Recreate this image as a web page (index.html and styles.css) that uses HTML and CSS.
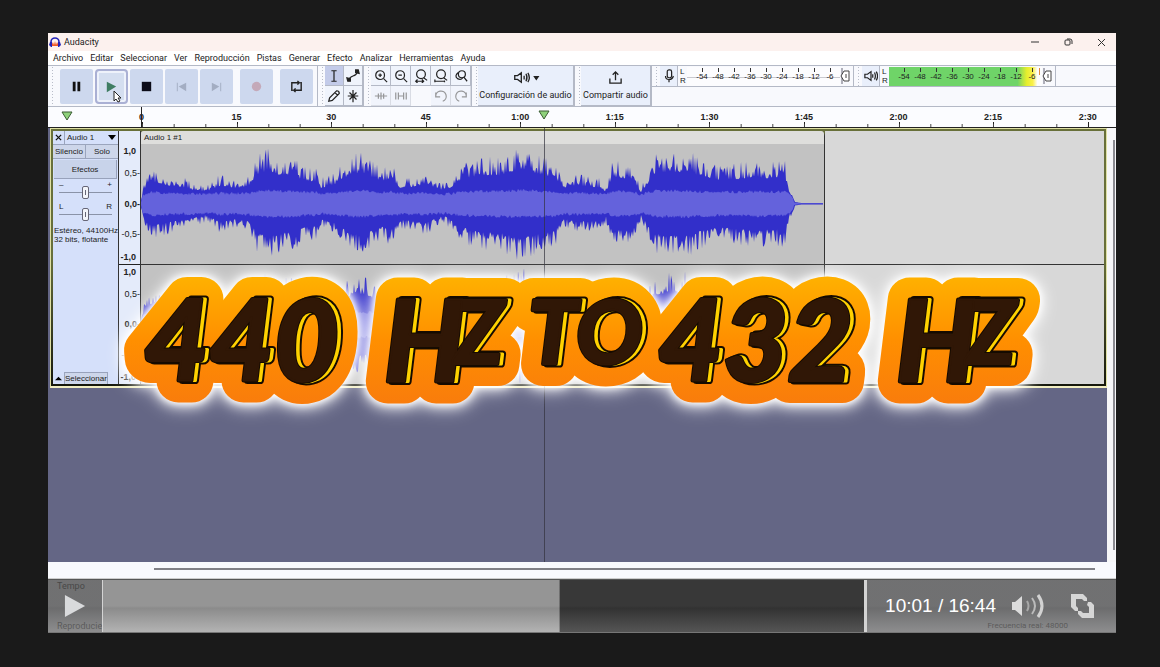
FILE: index.html
```
<!DOCTYPE html>
<html lang="es">
    <head>
        <meta charset="UTF-8">
        <meta name="viewport" content="width=device-width, initial-scale=1">
        <title>440 Hz to 432 Hz</title>
        <link rel="stylesheet" href="styles.css">
    </head>
    <body>
        <main class="player">
            <section class="app">
                <header class="titlebar">
                    <svg class="titlebar__logo" viewBox="0 0 12 12">
                        <path d="M2 7V6a4 4 0 0 1 8 0v1" fill="none" stroke="#2222b8" stroke-width="1.6"/>
                        <path d="M3 8l1-2 1 3 1-4 1 4 1-3 1 2v2H3z" fill="#f0592a"/>
                        <path d="M1 6h2v5H2L0 9zM11 6H9v5h1l2-2z" fill="#2222b8"/>
                    </svg>
                    <span class="titlebar__name">Audacity</span>
                    <button class="titlebar__button" aria-label="Minimizar"><svg viewBox="0 0 10 10"><path d="M1 5h8"/></svg></button>
                    <button class="titlebar__button" aria-label="Restaurar"><svg viewBox="0 0 10 10"><rect x="2" y="3" width="5" height="5" rx="1"/><path d="M4 2h3q2 0 2 2v3"/></svg></button>
                    <button class="titlebar__button" aria-label="Cerrar"><svg viewBox="0 0 10 10"><path d="M2 2l7 7M9 2L2 9"/></svg></button>
                </header>
                <nav class="menu">
                    <button>Archivo</button>
                    <button>Editar</button>
                    <button>Seleccionar</button>
                    <button>Ver</button>
                    <button>Reproducción</button>
                    <button>Pistas</button>
                    <button>Generar</button>
                    <button>Efecto</button>
                    <button>Analizar</button>
                    <button>Herramientas</button>
                    <button>Ayuda</button>
                </nav>
                <div class="toolbar">
                    <div class="transport grip">
                        <button aria-label="Pausa"><svg viewBox="0 0 16 16"><path d="M4 3h3v10H4zM9 3h3v10H9z" fill="#111"/></svg></button>
                        <button class="transport__active" aria-label="Reproducir"><svg viewBox="0 0 16 16"><path d="M3 3l10 5-10 6z" fill="#3f7d63"/></svg></button>
                        <button aria-label="Detener"><svg viewBox="0 0 16 16"><path d="M3 3h10v10H3z" fill="#0c0c18"/></svg></button>
                        <button aria-label="Inicio"><svg viewBox="0 0 16 16"><path d="M13 4v9L5 8zM3 4h1v9H3z" fill="#a3adc2"/></svg></button>
                        <button aria-label="Fin"><svg viewBox="0 0 16 16"><path d="M3 4v9l8-5zM12 4h1v9h-1z" fill="#a3adc2"/></svg></button>
                        <button class="transport__spaced" aria-label="Grabar"><svg viewBox="0 0 16 16"><circle cx="8" cy="8" r="5" fill="#c4a9b9"/></svg></button>
                        <button class="transport__spaced" aria-label="Bucle"><svg viewBox="0 0 16 16" fill="none" stroke="#222" stroke-width="1.5"><path d="M4 12H3V4h8M12 4h1v8H5M9 2l2 2-2 2M7 10l-2 2 2 2"/></svg></button>
                    </div>
                    <div class="tools tools--edit grip">
                        <button class="tools__active" aria-label="Selección"><svg viewBox="0 0 16 16"><path d="M5 2h6M5 14h6M8 2v12"/></svg></button>
                        <button aria-label="Envolvente"><svg viewBox="0 0 16 16"><path d="M3 13q1-4 5-5t5-5"/><path d="M1 10l4 1v3H2zM15 5l-4-1V1h3z" fill="#222"/></svg></button>
                        <button aria-label="Dibujar"><svg viewBox="0 0 16 16"><path d="M2 14l1-4 8-8q3 0 3 3l-8 8zM9 4l3 3"/></svg></button>
                        <button aria-label="Multiherramienta"><svg viewBox="0 0 16 16"><path d="M8 1v14M2 8h12M4 4l8 8M12 4l-8 8"/></svg></button>
                    </div>
                    <div class="tools tools--zoom grip">
                        <button aria-label="Acercar"><svg viewBox="0 0 16 16"><circle cx="7" cy="7" r="5"/><path d="M11 11l4 4M5 7h4M7 5v4"/></svg></button>
                        <button aria-label="Alejar"><svg viewBox="0 0 16 16"><circle cx="7" cy="7" r="5"/><path d="M11 11l4 4M5 7h4"/></svg></button>
                        <button aria-label="Ajustar selección"><svg viewBox="0 0 16 16"><circle cx="8" cy="6" r="5"/><path d="M11 10l4 3M2 14h9M4 12l-2 2 2 2M9 12l2 2-2 2"/></svg></button>
                        <button aria-label="Ajustar proyecto"><svg viewBox="0 0 16 16"><circle cx="8" cy="6" r="5"/><path d="M11 10l4 3M1 14h11M1 12v3M12 13v2"/></svg></button>
                        <button aria-label="Alternar zoom"><svg viewBox="0 0 16 16"><circle cx="9" cy="6" r="4"/><path d="M5 4q-5 4-1 7 4 2 6-1M11 9l4 5"/></svg></button>
                        <button class="tools__off" aria-label="Recortar"><svg viewBox="0 0 16 16"><path d="M1 8h14M5 5v6M8 4v8M11 5v6"/></svg></button>
                        <button class="tools__off" aria-label="Silenciar"><svg viewBox="0 0 16 16"><path d="M2 4v8M5 4v8M11 4v8M14 4v8M5 8h6"/></svg></button>
                        <span></span>
                        <button class="tools__off" aria-label="Deshacer"><svg viewBox="0 0 16 16"><path d="M2 4v5h5M2 9a6 6 0 1 1 8 5"/></svg></button>
                        <button class="tools__off" aria-label="Rehacer"><svg viewBox="0 0 16 16"><path d="M14 4v5H9M14 9a6 6 0 1 0-8 5"/></svg></button>
                    </div>
                    <div class="grip grip--wide">
                        <button class="wide wide--setup">
                            <svg viewBox="0 0 30 16"><path d="M4 6h3l4-3v10l-4-3H4zM14 6v4M16 4q2 4 0 8M18 3q3 5 0 10"/><path d="M25 7h4l-2 3z" fill="#222"/></svg>
                            Configuración de audio
                        </button>
                    </div>
                    <div class="grip grip--wide">
                        <button class="wide wide--share">
                            <svg viewBox="0 0 16 16"><path d="M2 9v5h12V9M8 11V2M5 5l3-3 3 3"/></svg>
                            Compartir audio
                        </button>
                    </div>
                    <div class="meters">
                        <div class="meter grip">
                            <button aria-label="Nivel de grabación"><svg viewBox="0 0 16 16"><rect x="6" y="1" width="5" height="9" rx="2"/><path d="M4 8q0 4 4 4t5-4M8 12v3"/></svg></button>
                            <span class="meter__sides">L<br>R</span>
                            <div class="meter__scale">
                                <span>-54</span><span>-48</span><span>-42</span><span>-36</span><span>-30</span><span>-24</span><span>-18</span><span>-12</span><span>-6</span>
                            </div>
                            <svg class="meter__knob" viewBox="0 0 10 18"><path d="M2 1v16" stroke="#667"/><path d="M4 4h5v10H4L1 9z" fill="#fff" stroke="#444"/><path d="M6 7v4" stroke="#444"/></svg>
                        </div>
                        <div class="meter grip">
                            <button aria-label="Nivel de reproducción"><svg viewBox="0 0 16 16"><path d="M1 6h3l4-3v10l-4-3H1zM10 6v4M12 4q2 4 0 8M14 3q3 5 0 10"/></svg></button>
                            <span class="meter__sides">L<br>R</span>
                            <div class="meter__scale meter__scale--live">
                                <span>-54</span><span>-48</span><span>-42</span><span>-36</span><span>-30</span><span>-24</span><span>-18</span><span>-12</span><span>-6</span>
                            </div>
                            <svg class="meter__knob" viewBox="0 0 10 18"><path d="M2 1v16" stroke="#667"/><path d="M4 4h5v10H4L1 9z" fill="#fff" stroke="#444"/><path d="M6 7v4" stroke="#444"/></svg>
                        </div>
                    </div>
                    <svg class="cursor" viewBox="0 0 9 13"><path d="M1 1v10l2-2 2 3 2-1-2-3h3z" fill="#fff" stroke="#222"/></svg>
                </div>
                <div class="ruler">
                    <svg class="ruler__pin" viewBox="0 0 12 10"><path d="M1 1h10L6 9z"/></svg>
                    <div class="ruler__scale">
                        <span>0</span><span>15</span><span>30</span><span>45</span><span>1:00</span><span>1:15</span><span>1:30</span><span>1:45</span><span>2:00</span><span>2:15</span><span>2:30</span>
                    </div>
                    <svg class="ruler__pin ruler__pin--play" viewBox="0 0 12 10"><path d="M1 1h10L6 9z"/></svg>
                </div>
                <div class="workspace">
                    <div class="tracks">
                        <div class="track">
                            <div class="panel">
                                <div class="panel__row">
                                    <button class="panel__close" aria-label="Cerrar pista"><svg viewBox="0 0 8 8"><path d="M1 1l6 6M7 1L1 7" stroke="#111" stroke-width="1.5"/></svg></button>
                                    <button class="panel__name">Audio 1 <svg viewBox="0 0 8 5"><path d="M0 0h8L4 5z"/></svg></button>
                                </div>
                                <div class="panel__row">
                                    <button class="panel__half">Silencio</button>
                                    <button class="panel__half">Solo</button>
                                </div>
                                <button class="panel__effects">Efectos</button>
                                <label class="fader"><span>–</span><span>+</span><input type="range" aria-label="Ganancia"></label>
                                <label class="fader"><span>L</span><span>R</span><input type="range" aria-label="Balance"></label>
                                <p class="panel__info">Estéreo, 44100Hz<br>32 bits, flotante</p>
                                <div class="panel__row panel__row--end">
                                    <button class="panel__close" aria-label="Contraer"><svg viewBox="0 0 8 8"><path d="M0 6h8L4 2z"/></svg></button>
                                    <button class="panel__select">Seleccionar</button>
                                </div>
                            </div>
                            <div class="levels">
                                <div class="levels__channel"><b>1,0</b><span>0,5-</span><b>0,0-</b><span>-0,5-</span><b>-1,0</b></div>
                                <div class="levels__channel"><b>1,0</b><span>0,5-</span><b>0,0-</b><span>-0,5-</span><b>-1,0</b></div>
                            </div>
                            <div class="clip">
                                <div class="clip__name">Audio 1 #1</div>
                                <svg class="clip__wave" data-wave="7" viewBox="0 0 683 120" preserveAspectRatio="none"></svg>
                                <svg class="clip__wave" data-wave="31" viewBox="0 0 683 120" preserveAspectRatio="none"></svg>
                            </div>
                            <div class="rest"><div></div><div></div></div>
                        </div>
                    </div>
                    <div class="vscroll"></div>
                    <div class="playhead"></div>
                </div>
                <div class="hscroll"></div>
                <footer class="status">
                    <div><span>Tempo</span><span>Reproducien</span></div>
                    <div class="status__rate">Frecuencia real: 48000</div>
                </footer>
            </section>

            <svg class="caption" viewBox="0 0 1068 150" role="img" aria-label="440 Hz to 432 Hz">
                <defs>
                    <linearGradient id="orange" gradientUnits="userSpaceOnUse" x1="0" y1="10" x2="0" y2="136">
                        <stop offset="0" stop-color="#ffb000"/>
                        <stop offset=".5" stop-color="#ff8f00"/>
                        <stop offset="1" stop-color="#f97c0c"/>
                    </linearGradient>
                    <g id="words">
                        <text x="96" y="113">440</text>
                        <text x="336" y="113">H</text>
                        <text class="caption__small" x="406" y="96">Z</text>
                        <text class="caption__small" x="480" y="96">TO</text>
                        <text x="610" y="113">432</text>
                        <text x="848" y="113">H</text>
                        <text class="caption__small" x="918" y="96">Z</text>
                    </g>
                </defs>
                <use class="caption__halo" href="#words"/>
                <use class="caption__shade" href="#words" x="4"/>
                <use class="caption__edge" href="#words" x="4"/>
                <use class="caption__outline" href="#words"/>
                <use class="caption__face" href="#words"/>
            </svg>

            <div class="controls">
                <button class="controls__play" aria-label="Reproducir vídeo">
                    <svg viewBox="0 0 24 26"><path d="M1 1l22 12L1 25z" fill="#d9dadc"/></svg>
                </button>
                <input class="controls__seek" type="range" min="0" max="1004" value="601" aria-label="Posición" style="--played: 60%">
                <span class="controls__time">10:01 / 16:44</span>
                <button class="controls__sound" aria-label="Volumen">
                    <svg viewBox="0 0 34 26"><path d="M0 9h3l7-6v20l-7-6H0z" fill="#dcdcdc"/><path d="M15 8q3 5 0 10" fill="none" stroke="#a8a8a8" stroke-width="2"/><path d="M20 5q6 8 0 16" fill="none" stroke="#bbb" stroke-width="2"/><path d="M26 2q8 11 0 22" fill="none" stroke="#d2d2d2" stroke-width="3"/></svg>
                </button>
                <button class="controls__full" aria-label="Pantalla completa">
                    <svg viewBox="0 0 26 26"><path d="M1 1h12l4 4v3h-3l-2-2H6v7l2 2v3H5l-4-4z" fill="#d6d6d6"/><path d="M18 9h3l3 3v13H12l-4-4v-3h3l2 2h6v-6l-2-2z" fill="#d6d6d6"/></svg>
                </button>
            </div>
        </main>
        <script src="waves.js"></script>
    </body>
</html>
```

FILE: styles.css
```
:root{
    --ui: Roboto, "Open Sans", sans-serif;
    --small: "Liberation Sans", Arial, sans-serif;
    --line: #b4b9c6;
    --button: #e9effb;
}

*{
    box-sizing: border-box;
}

html, body{
    margin: 0;
}

body{
    display: flex;
    min-height: 100vh;
    padding: 33px 44px 34px 48px;
    background: #1a1a1a;
    font-family: var(--ui);
    font-size: 9px;
    color: #222;
}

button{
    margin: 0;
    padding: 0;
    border: 0;
    background: none;
    color: inherit;
    font: inherit;
}

svg{
    display: block;
}

.player{
    position: relative;
    flex: 1;
    min-width: 0;
    display: flex;
    overflow: hidden;
}

.app{
    flex: 1;
    min-width: 0;
    display: flex;
    flex-direction: column;
    background: #f8f9fd;
}

/* window chrome */

.titlebar{
    display: flex;
    align-items: center;
    height: 18px;
    padding: 0 4px 0 1px;
    background: #fcf1ee;
}

.titlebar__logo{
    width: 12px;
    height: 12px;
    margin-right: 3px;
}

.titlebar__name{
    flex: 1;
}

.titlebar__button{
    width: 22px;
    margin-left: 11px;
}

.titlebar__button svg{
    width: 10px;
    margin: auto;
    fill: none;
    stroke: #333;
}

.menu{
    display: flex;
    align-items: center;
    gap: 7px;
    height: 14px;
    padding-left: 5px;
    background: #fff;
}

.menu button{
    line-height: 12px;
}

/* toolbars */

.toolbar{
    position: relative;
    display: flex;
    height: 42px;
    border-top: 1px solid var(--line);
    border-bottom: 1px solid var(--line);
}

.grip{
    display: flex;
    padding-left: 8px;
    border-right: 1px solid var(--line);
    background: radial-gradient(circle, #b9bdc9 1px, transparent 1px) 3px 0 / 3px 3px repeat-y;
}

.grip--wide{
    padding-left: 6px;
}

.transport{
    align-items: center;
    gap: 2px;
    padding: 0 4px 0 12px;
}

.transport button{
    width: 33px;
    height: 35px;
    border-radius: 2px;
    background: #cdd8ee;
}

.transport .transport__active{
    border: 2px solid #aab0d4;
    border-radius: 4px;
    background: #d4def0;
    box-shadow: inset 0 0 0 2px #eef2fb;
}

.transport .transport__spaced{
    margin-left: 5px;
}

.transport svg{
    width: 15px;
    margin: auto;
}

.tools{
    display: grid;
    grid-template-rows: 20px 20px;
    padding-left: 7px;
}

.tools--edit{
    grid-template-columns: repeat(2, 19px);
}

.tools--zoom{
    grid-template-columns: repeat(5, 20px);
}

.tools button{
    border: solid var(--line);
    border-width: 0 1px 1px 0;
    background: #f0f4fc;
}

.tools .tools__active{
    background: #c3cbe9;
}

.tools .tools__off{
    background: var(--button);
    opacity: .45;
}

.tools svg{
    width: 14px;
    margin: auto;
}

.tools svg, .wide svg, .meter button svg{
    fill: none;
    stroke: #222;
    stroke-width: 1.4;
}

.wide{
    display: flex;
    flex-direction: column;
    align-items: center;
    justify-content: space-evenly;
    border: solid var(--line);
    border-width: 0 1px 1px 0;
    background: var(--button);
    line-height: 12px;
    white-space: nowrap;
}

.wide svg{
    height: 15px;
}

.wide--setup{
    width: 96px;
}

.wide--share{
    width: 70px;
}

.meters{
    display: flex;
    align-items: flex-start;
    flex: 1;
    background: linear-gradient(var(--line), var(--line)) 0 20px / 100% 1px no-repeat;
}

.meter{
    height: 20px;
    align-items: center;
    padding-right: 3px;
    font-family: var(--small);
    font-size: 8px;
}

.meter button{
    width: 18px;
    height: 20px;
    border-right: 1px solid var(--line);
    background: var(--button);
}

.meter button svg{
    width: 14px;
    margin: auto;
}

.meter__sides{
    width: 9px;
    padding-left: 2px;
    line-height: 9px;
}

.meter__scale{
    display: flex;
    width: 153px;
    height: 19px;
    padding-left: 7px;
    background: linear-gradient(#c9c9cf, #c9c9cf) 0 10px / 100% 1px no-repeat, #fcfcfe;
}

.meter__scale--live{
    background:
        linear-gradient(#e08a3c, #e08a3c) 150px 1px / 1px 7px no-repeat,
        linear-gradient(90deg, #6fd468 0 84%, #e6ee2c 90%, #fbf04a 94%, #fdfdfd 97%);
}

.meter__scale span{
    width: 16px;
    flex: none;
    padding-top: 1px;
    line-height: 17px;
    text-align: center;
    background: linear-gradient(#333, #333) 8px 1px / 1px 4px no-repeat;
}

.meter__knob{
    width: 10px;
    height: 18px;
}

.cursor{
    position: absolute;
    left: 65px;
    top: 24px;
    width: 9px;
    height: 13px;
}

.ruler{
    position: relative;
    display: flex;
    align-items: center;
    height: 21px;
    border-bottom: 1px solid #222;
    background: #fbfcff;
}

.ruler__pin{
    width: 12px;
    height: 10px;
    margin: 0 68px 2px 13px;
    fill: #8ed17b;
    stroke: #3b5d35;
}

.ruler__pin--play{
    position: absolute;
    left: 46.4%;
    top: 3px;
    margin: 0 0 0 -6px;
}

.ruler__scale{
    flex: 1;
    display: flex;
    align-self: stretch;
    font-family: var(--small);
    font-weight: bold;
    font-size: 9px;
    line-height: 20px;
}

.ruler__scale span{
    flex: 1 1 0;
    display: flex;
    min-width: 0;
    background:
        linear-gradient(90deg, #444 1px, transparent 1px) 0 100% / 33.33% 3px repeat-x,
        linear-gradient(90deg, #222 1px, transparent 1px) 0 100% / 100% 5px no-repeat;
    text-indent: -5px;
}

.ruler__scale span:nth-child(n + 5){
    text-indent: -9px;
}

.ruler__scale span:first-child{
    border-left: 1px solid #222;
    text-indent: -3px;
}

.ruler__scale span:last-child{
    flex-grow: .3;
    background: linear-gradient(90deg, #222 1px, transparent 1px) 0 100% / 100% 5px no-repeat;
}

/* tracks */

.workspace{
    position: relative;
    flex: 1;
    display: flex;
}

.tracks{
    flex: 1;
    background: #646685;
}

.track{
    display: flex;
    height: 260px;
    margin-left: 2px;
    padding: 2px;
    border: 1px solid #dfe0a4;
    border-bottom: 2px solid #f1eec3;
    background: linear-gradient(#68703a 50%, #15170c);
}

.panel{
    display: flex;
    flex-direction: column;
    width: 65px;
    background: #d5e0fa;
    font-family: var(--small);
    font-size: 8px;
}

.panel__row{
    display: flex;
    height: 14px;
    border-bottom: 1px solid #9ba5bd;
}

.panel__close{
    width: 12px;
    border-right: 1px solid #9ba5bd;
}

.panel__close svg{
    width: 7px;
    margin: auto;
}

.panel__name{
    flex: 1;
    display: flex;
    align-items: center;
    justify-content: space-between;
    padding: 0 2px;
}

.panel__name svg{
    width: 8px;
}

.panel__half{
    flex: 1;
    background: #cdd6ea;
}

.panel__half + .panel__half{
    border-left: 1px solid #9ba5bd;
}

.panel__effects{
    height: 19px;
    margin: 1px 1px 2px;
    border: solid #98a2bb;
    border-width: 0 1px 1px 0;
    background: #c8d3ea;
}

.fader{
    display: grid;
    grid-template-columns: 1fr 1fr;
    grid-template-rows: 5px 13px;
    height: 22px;
    padding: 0 6px;
    line-height: 8px;
}

.fader span + span{
    text-align: right;
}

.fader input{
    grid-column: span 2;
    width: 100%;
    height: 13px;
    margin: 0;
    appearance: none;
    background: linear-gradient(#8a93a8, #8a93a8) 0 6px / 100% 1px no-repeat;
}

.fader input::-webkit-slider-thumb{
    appearance: none;
    width: 7px;
    height: 13px;
    border: 1px solid #667;
    border-radius: 2px;
    background: linear-gradient(#667, #667) 2px 3px / 1px 5px no-repeat, #f3f5fb;
}

.panel__info{
    margin: 1px 0 0 1px;
    font-size: 8px;
    line-height: 9px;
    white-space: nowrap;
}

.panel__row--end{
    height: 12px;
    margin-top: auto;
    border-bottom: 0;
}

.panel__select{
    border: solid #98a2bb;
    border-width: 1px 1px 0 0;
    background: #cdd6ea;
}

.levels{
    display: flex;
    flex-direction: column;
    width: 23px;
    padding-top: 13px;
    border: solid #333;
    border-width: 0 1px;
    background: #e4ebfa;
    font-family: var(--small);
    font-size: 9px;
    text-align: right;
}

.levels__channel{
    flex: 1;
    display: grid;
    grid-template-rows: 14px 1fr 1fr 1fr 14px;
    align-items: center;
}

.levels__channel b:first-child, .levels__channel b:last-child{
    padding-right: 4px;
}

.levels__channel + .levels__channel{
    border-top: 1px solid #222;
}

.clip{
    flex: 71;
    display: flex;
    flex-direction: column;
    min-width: 0;
    border-right: 1px solid #333;
    border-radius: 3px 5px 0 0;
    background: #c2c2c2;
}

.clip__name{
    height: 13px;
    padding-left: 3px;
    border-radius: 3px 3px 0 0;
    background: #dededc;
    font-family: var(--small);
    font-size: 8px;
    line-height: 14px;
}

.clip__wave{
    flex: 1;
    width: 100%;
    min-height: 0;
}

.clip__wave + .clip__wave{
    border-top: 1px solid #333;
}

.wave__peak{
    fill: #322fca;
}

.wave__rms{
    fill: #6462dc;
}

.rest{
    flex: 29;
    display: flex;
    flex-direction: column;
    padding-top: 13px;
    background: #d8d8d8;
}

.rest div{
    flex: 1;
}

.rest div + div{
    border-top: 1px solid #333;
}

.vscroll{
    width: 9px;
    background: linear-gradient(#8a8a90, #8a8a90) 6px 12px / 2px calc(100% - 24px) no-repeat, #f6f6f8;
}

.playhead{
    position: absolute;
    left: 46.4%;
    top: 0;
    bottom: 0;
    width: 1px;
    background: rgba(50, 50, 60, .7);
}

.hscroll{
    height: 16px;
    margin: 0 21px 0 106px;
    background: linear-gradient(#808086, #808086) 0 6px / 100% 2px no-repeat;
}

.status{
    display: flex;
    justify-content: space-between;
    height: 55px;
    padding: 1px 48px 1px 9px;
    border-top: 1px solid #ccc;
    color: #666;
    line-height: 12px;
}

.status div{
    display: flex;
    flex-direction: column;
    justify-content: space-between;
}

.status .status__rate{
    justify-content: flex-end;
    font-size: 8px;
}

/* caption over the video */

.caption{
    position: absolute;
    left: 0;
    top: 235px;
    width: 100%;
    overflow: visible;
    font-family: Lato, "Open Sans", sans-serif;
    font-style: italic;
    font-weight: 900;
    font-size: 112px;
    stroke-linejoin: round;
}

.caption__small{
    font-size: 88px;
}

.caption__halo{
    fill: url(#orange);
    stroke: url(#orange);
    stroke-width: 44px;
    filter: drop-shadow(0 0 3px #fff) drop-shadow(0 0 6px #fff) drop-shadow(0 2px 8px rgba(255, 255, 255, .6));
}

.caption__shade{
    fill: #160b00;
    stroke: #160b00;
    stroke-width: 7px;
}

.caption__edge{
    fill: #ffd200;
    stroke: #ffd200;
    stroke-width: 3px;
}

.caption__outline{
    fill: #160b00;
    stroke: #160b00;
    stroke-width: 4px;
}

.caption__face{
    fill: #301706;
    stroke: #301706;
    stroke-width: 2px;
}

/* video controls */

.controls{
    position: absolute;
    left: 0;
    right: 0;
    bottom: 0;
    display: flex;
    align-items: center;
    height: 54px;
    border-top: 1px solid #555;
    border-bottom: 1px solid #777;
    background: linear-gradient(rgba(60, 60, 60, .72) 50%, rgba(54, 54, 54, .72) 54%, rgba(100, 100, 100, .72));
}

.controls__play{
    width: 54px;
    padding-left: 16px;
}

.controls__play svg{
    width: 22px;
}

.controls__seek{
    flex: 1;
    min-width: 0;
    height: 100%;
    margin: 0;
    appearance: none;
    border: solid #d4d4d4;
    border-width: 0 3px 0 1px;
    background:
        linear-gradient(#959595 50%, #8b8b8b 54%, #b3b3b3) 0 0 / var(--played) 100% no-repeat,
        linear-gradient(#383838 50%, #323232 54%, #555);
}

.controls__seek::-webkit-slider-thumb{
    appearance: none;
    width: 0;
}

.controls__time{
    margin: 0 16px 0 18px;
    color: #fff;
    font-family: var(--small);
    font-size: 19px;
}

.controls__sound svg{
    width: 34px;
}

.controls__full{
    margin: 0 20px 0 24px;
}

.controls__full svg{
    width: 26px;
}
```

FILE: waves.js
```
// [x, level] pairs along the clip
const envelope = [
    [0, 4], [3, 16], [8, 24], [14, 27], [30, 22], [44, 20], [58, 16], [64, 14], [80, 23], [95, 19],
    [108, 22], [116, 36], [127, 42], [139, 36], [150, 36], [164, 29], [175, 28], [179, 19], [194, 24],
    [211, 38], [224, 38], [239, 27], [250, 32], [259, 20], [270, 21], [284, 24], [299, 16], [305, 16],
    [320, 29], [339, 36], [359, 35], [379, 44], [399, 36], [414, 33], [424, 18], [434, 22], [449, 22],
    [462, 18], [465, 14], [471, 34], [484, 32], [495, 24], [500, 14], [514, 38], [549, 40], [559, 34],
    [579, 29], [599, 31], [614, 34], [629, 31], [644, 33], [648, 14], [654, 3], [660, 1], [683, 1]
];

const levelAt = x => {
    const next = envelope.findIndex(point => point[0] >= x);

    if(next < 1) return envelope[0][1];

    const [x1, y1] = envelope[next - 1];
    const [x2, y2] = envelope[next];

    return y1 + (y2 - y1) * (x - x1) / (x2 - x1);
};

const createRandom = seed => () => {
    seed = (seed * 16807) % 2147483647;

    return seed / 2147483647;
};

const addPath = (svg, className, getHeight) => {
    const path = document.createElementNS('http://www.w3.org/2000/svg', 'path');
    let top = 'M0 60';
    let bottom = '';

    for(let x = 0; x < 683; x++){
        top += `L${x} ${(60 - getHeight(x)).toFixed(1)}`;
        bottom = `L${x} ${(60 + getHeight(x)).toFixed(1)}` + bottom;
    }

    path.setAttribute('d', top + bottom + 'Z');
    path.classList.add(className);
    svg.appendChild(path);
};

document.querySelectorAll('[data-wave]').forEach(svg => {
    const random = createRandom(Number(svg.dataset.wave) * 7919);

    addPath(svg, 'wave__peak', x => {
        const level = levelAt(x);

        return level < 4 ? level / 2 + .3 : level * (.8 + .55 * random() ** 2);
    });
    addPath(svg, 'wave__rms', x => {
        const level = levelAt(x);

        return level < 5 ? level / 3 : Math.min(level * .8, 6 + level * .14 + random() * 3);
    });
});
```
